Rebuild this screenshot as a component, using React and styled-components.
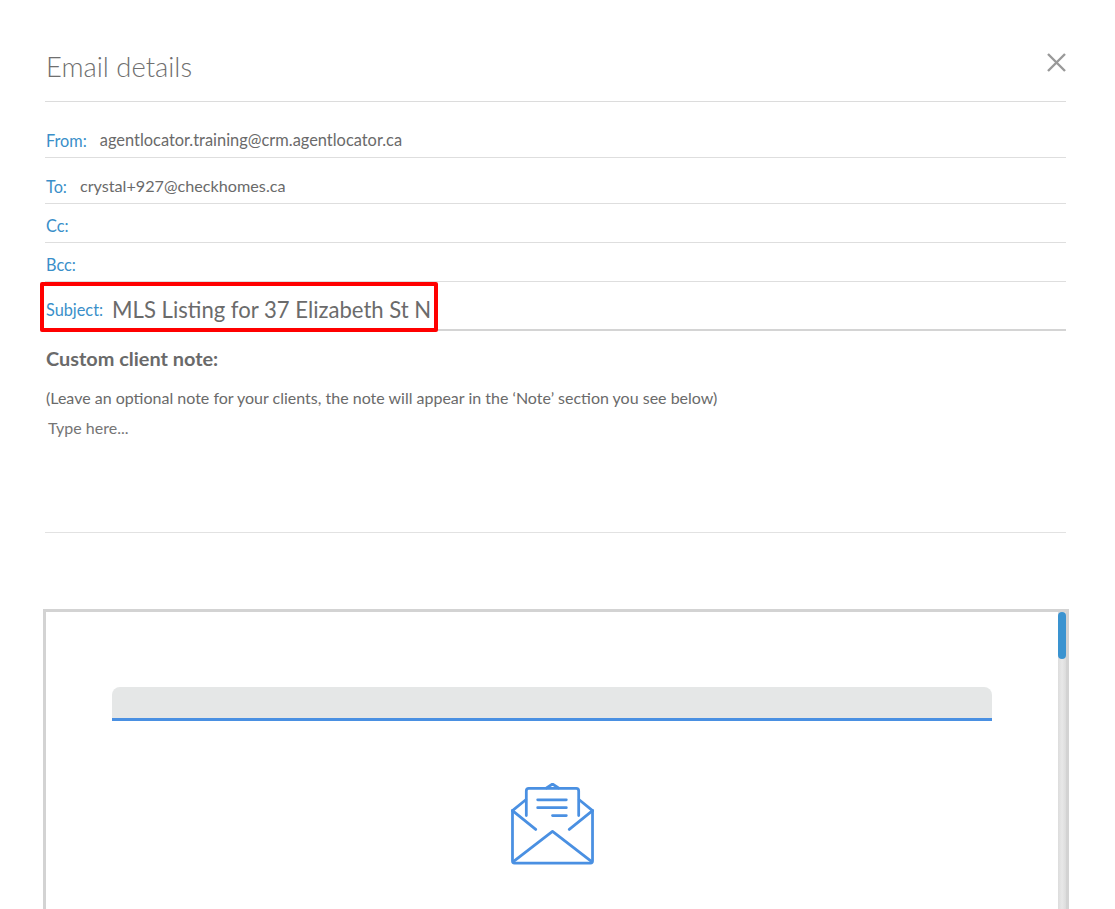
import React from "react";
import styled, { createGlobalStyle } from "styled-components";

const Global = createGlobalStyle`
  html, body { margin: 0; padding: 0; height: 909px; overflow: hidden; background: #fff; }
  body { font-family: Lato, "Open Sans", sans-serif; color: #666; }
`;

const Page = styled.div`
  height: 909px;
  padding: 0 49px 0 45px;
  display: flex;
  flex-direction: column;
  overflow: hidden;
`;

const Header = styled.header`
  box-sizing: border-box;
  border-bottom: 1px solid #dcdcdc;
  display: flex;
  justify-content: space-between;
  height: 102px;
`;

const Title = styled.h1`
  margin: 49px 0 0 1px;
  font-size: 27.4px;
  line-height: 36px;
  font-weight: 300;
  color: #6f6f6f;
`;

const Close = styled.button`
  margin: 52px -1px 0 0;
  padding: 0;
  width: 21px;
  height: 21px;
  border: 0;
  background: none;
  color: #999;
  svg { display: block; }
`;

const Row = styled.div`
  box-sizing: border-box;
  height: ${(p) => p.$h}px;
  padding: 0 0 ${(p) => p.$pb}px 1px;
  border-bottom: 1px solid #dedede;
  display: flex;
  align-items: flex-end;
  gap: ${(p) => p.$gap || 13}px;
  line-height: 20px;
`;

const Label = styled.span`
  color: #3a8fc9;
  font-size: 16.3px;
`;

const Value = styled.span`
  color: #6a6a6a;
  font-size: ${(p) => p.$size || 16.3}px;
  position: relative;
  top: -1px;
`;

const SubjectRow = styled.div`
  box-sizing: border-box;
  height: 49px;
  padding: 8px 0 0 1px;
  border-bottom: 2px solid #d4d4d4;
  display: flex;
  align-items: center;
`;

const Highlight = styled.div`
  position: relative;
  display: flex;
  align-items: center;
  gap: 9px;
  &::after {
    content: "";
    position: absolute;
    left: -6px;
    right: -7px;
    top: -13px;
    bottom: -7px;
    border: 4px solid #ff0000;
    border-radius: 2px;
  }
`;

const SubjectText = styled.span`
  font-size: 22.1px;
  line-height: 30px;
  color: #6b6b6b;
`;

const NoteSection = styled.section`
  box-sizing: border-box;
  height: 202px;
  padding-left: 1px;
  border-bottom: 1px solid #e2e2e2;
`;

const NoteTitle = styled.h2`
  margin: 15px 0 0;
  font-size: 19.9px;
  line-height: 24px;
  font-weight: 700;
  color: #6a6a6a;
`;

const NoteHint = styled.p`
  margin: 18px 0 0;
  font-size: 16px;
  line-height: 20px;
  color: #6a6a6a;
`;

const Placeholder = styled.div`
  margin: 10px 0 0 2px;
  font-size: 16px;
  line-height: 20px;
  color: #757575;
`;

const Frame = styled.div`
  margin: 76px -3px 0 -2px;
  flex: 1;
  position: relative;
  box-sizing: border-box;
  border: 3px solid #d3d3d3;
  border-bottom: 0;
  overflow: hidden;
`;

const EmailBody = styled.div`
  padding: 75px 74px 0 66px;
  display: flex;
  flex-direction: column;
  align-items: stretch;
`;

const EmailBar = styled.div`
  height: 34px;
  box-sizing: border-box;
  background: #e5e7e7;
  border-bottom: 3px solid #4a90e2;
  border-radius: 8px 8px 0 0;
`;

const MailIcon = styled.svg`
  display: block;
  margin: 62px auto 0;
  width: 83px;
  height: 83px;
  color: #4a90e2;
`;

const Track = styled.div`
  position: absolute;
  top: 0;
  right: 0;
  bottom: 0;
  width: 8px;
  background: linear-gradient(to right, #dcdcdc, #e8e8e8 50%, #dcdcdc);
`;

const Thumb = styled.div`
  height: 47px;
  border-radius: 4px;
  background: #3a93d0;
`;

export default function App() {
  return (
    <Page>
      <Global />
      <Header>
        <Title>Email details</Title>
        <Close aria-label="Close">
          <svg width="21" height="21" viewBox="0 0 21 21" fill="none" stroke="currentColor" strokeWidth="2.4">
            <path d="M2 2 L19 19 M19 2 L2 19" />
          </svg>
        </Close>
      </Header>
      <Row $h={56} $pb={6}>
        <Label>From:</Label>
        <Value $size={16.4}>agentlocator.training@crm.agentlocator.ca</Value>
      </Row>
      <Row $h={46} $pb={6}>
        <Label>To:</Label>
        <Value $size={16.2}>crystal+927@checkhomes.ca</Value>
      </Row>
      <Row $h={39} $pb={6}>
        <Label>Cc:</Label>
      </Row>
      <Row $h={39} $pb={6}>
        <Label>Bcc:</Label>
      </Row>
      <SubjectRow>
        <Highlight>
          <Label>Subject:</Label>
          <SubjectText>MLS Listing for 37 Elizabeth St N</SubjectText>
        </Highlight>
      </SubjectRow>
      <NoteSection>
        <NoteTitle>Custom client note:</NoteTitle>
        <NoteHint>(Leave an optional note for your clients, the note will appear in the ‘Note’ section you see below)</NoteHint>
        <Placeholder>Type here...</Placeholder>
      </NoteSection>
      <Frame>
        <EmailBody>
          <EmailBar />
          <MailIcon viewBox="0 0 84 84" fill="none" stroke="currentColor" strokeWidth="2.8" strokeLinecap="round" strokeLinejoin="round">
            <path d="M1.5 28 V79 Q1.5 81 3.5 81 H80.5 Q82.5 81 82.5 79 V28" />
            <path d="M1.5 28 L15 17 M82.5 28 L69 17" />
            <path d="M1.5 28 L25 47 M82.5 28 L59 47" />
            <path d="M3 79 L42 49 L81 79" />
            <path d="M15.5 33 V8 Q15.5 5.5 18 5.5 H66 Q68.5 5.5 68.5 8 V33" />
            <path d="M36 5 L42 1 L48 5" />
            <path d="M27 17 H56 M27 25 H56 M42 33 H56" />
          </MailIcon>
        </EmailBody>
        <Track>
          <Thumb />
        </Track>
      </Frame>
    </Page>
  );
}
